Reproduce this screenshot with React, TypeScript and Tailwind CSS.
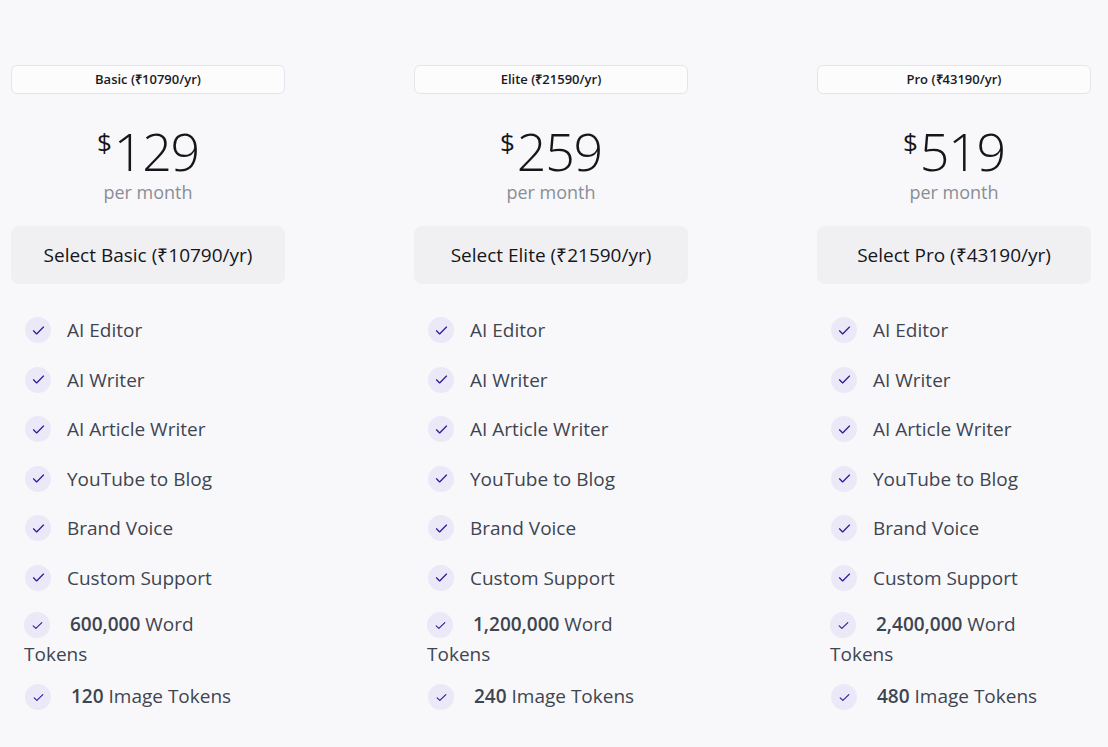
import React from 'react';

const features = ['AI Editor', 'AI Writer', 'AI Article Writer', 'YouTube to Blog', 'Brand Voice', 'Custom Support'];

const plans = [
  { name: 'Basic', yr: '10790', price: '129', words: '600,000', images: '120' },
  { name: 'Elite', yr: '21590', price: '259', words: '1,200,000', images: '240' },
  { name: 'Pro', yr: '43190', price: '519', words: '2,400,000', images: '480' },
];

const Check = ({ small }: { small?: boolean }) => (
  <span className="inline-flex w-[26px] h-[26px] shrink-0 items-center justify-center rounded-full bg-[#ebe8f8] align-middle">
    <svg width={small ? 13 : 15} height={small ? 13 : 15} viewBox="0 0 24 24" fill="none" stroke="#2e1a9a" strokeWidth="2" strokeLinecap="round" strokeLinejoin="round">
      <path d="M4 12.5l5 5L20 6.5" />
    </svg>
  </span>
);

const App = () => {
  return (
    <div className="min-h-[747px] bg-[#f8f8fb] pt-[65px] px-[11px] text-[#3f4550]" style={{ fontFamily: '"Open Sans", sans-serif' }}>
      <div className="flex gap-[129px]">
        {plans.map((p) => (
          <div key={p.name} className="w-[274px] flex flex-col">
            <div className="h-[29px] rounded-md border border-[#e4e4ea] bg-white/60 flex items-center justify-center text-[13px] font-semibold text-[#1a1a1f]">
              {p.name} (₹{p.yr}/yr)
            </div>
            <div className="mt-[25px] flex justify-center items-start text-[#15151a]">
              <span className="text-[26px] mt-[4px] mr-[2px]">$</span>
              <span className="text-[52px] leading-[64px] font-light tracking-tight">{p.price}</span>
            </div>
            <div className="text-center text-[18px] text-[#8a8e96] mt-[-4px]">per month</div>
            <button className="mt-[20px] h-[58px] rounded-lg bg-[#f0f0f3] text-[19px] text-[#15151a]">
              Select {p.name} (₹{p.yr}/yr)
            </button>
            <div className="mt-[33px] pl-[14px] flex flex-col">
              {features.map((f) => (
                <div key={f} className="h-[49.6px] flex items-start gap-[16px]">
                  <Check />
                  <span className="text-[19px] leading-[26px]">{f}</span>
                </div>
              ))}
              <p className="text-[19px] leading-[30px] -mt-[6px] -ml-[1px] max-w-[200px]">
                <Check small />
                <span className="ml-[20px] font-semibold">{p.words}</span> Word Tokens
              </p>
              <p className="text-[19px] leading-[30px] mt-[12px]">
                <Check small />
                <span className="ml-[20px] font-semibold">{p.images}</span> Image Tokens
              </p>
            </div>
          </div>
        ))}
      </div>
    </div>
  );
};

export default App;
